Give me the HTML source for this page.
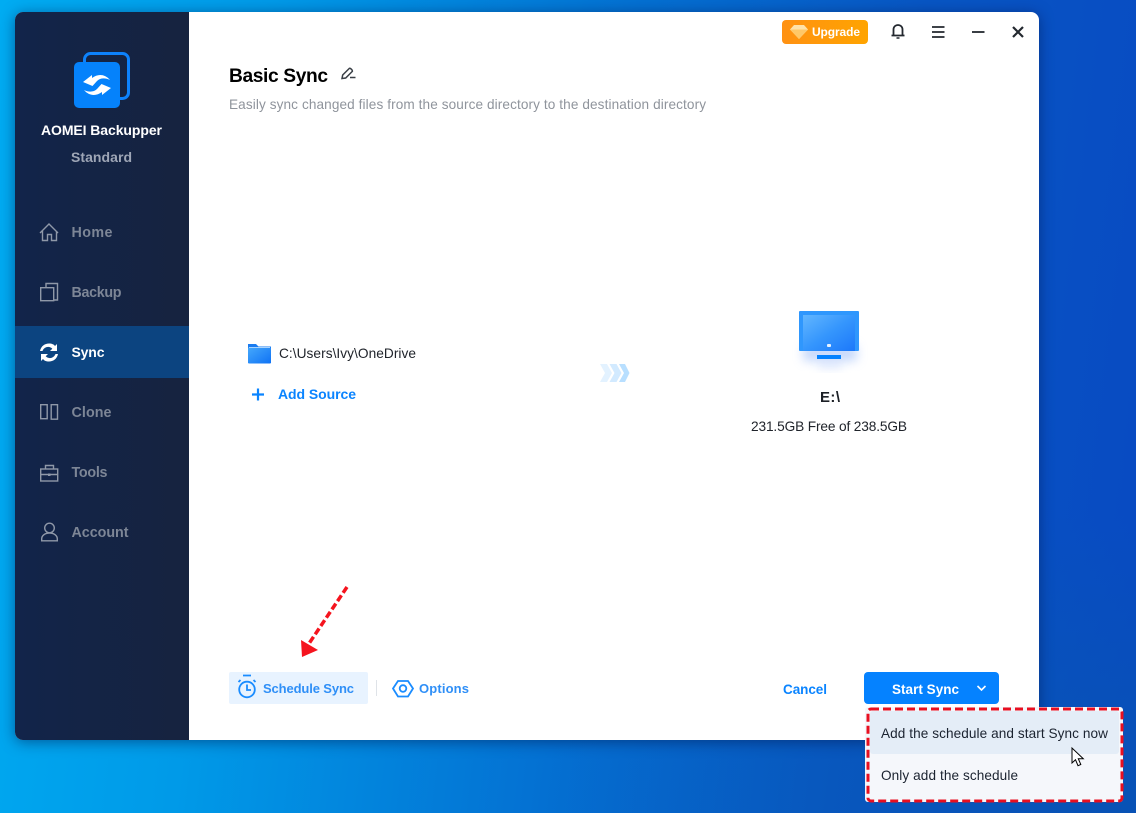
<!DOCTYPE html>
<html><head><meta charset="utf-8"><style>
html,body{margin:0;padding:0;width:1136px;height:813px;overflow:hidden}
body{position:relative;background:radial-gradient(600px 300px at 100% 100%,rgba(8,90,170,.55),rgba(8,90,170,0)),linear-gradient(97deg,#00acf2 0,#009ae8 22%,#0470d2 52%,#0856c4 75%,#0849c2 100%)}
.a{position:absolute}
svg{position:absolute;left:0;top:0}
text{font-family:"Liberation Sans",sans-serif}
</style></head><body>
<div class="a" style="left:15px;top:12px;width:1024px;height:728px;border-radius:8px;background:#fff;box-shadow:0 2px 14px rgba(0,20,70,.5);overflow:hidden">
<div class="a" style="left:0;top:0;width:174px;height:728px;background:linear-gradient(90deg,#12244a,#16233f)"></div>
<div class="a" style="left:0;top:314px;width:174px;height:52px;background:#0c4480"></div>
</div>
<div class="a" style="left:782px;top:20px;width:86px;height:24px;border-radius:4px;background:linear-gradient(90deg,#ff9112,#ffa400)"></div>
<div class="a" style="left:229px;top:672px;width:139px;height:32px;border-radius:2px;background:#e8f3ff"></div>
<div class="a" style="left:864px;top:672px;width:135px;height:32px;border-radius:4px;background:#0582ff"></div>
<div class="a" style="left:865px;top:707px;width:258px;height:95px;border-radius:3px;background:#f5f7fb"></div>
<div class="a" style="left:870px;top:711px;width:249px;height:43px;border-radius:3px;background:#e4edf7"></div>
<svg width="1136" height="813" viewBox="0 0 1136 813" fill="none">
<defs>
<linearGradient id="sc" x1="0" y1="0" x2="1" y2="1"><stop offset="0" stop-color="#62b6fe"/><stop offset=".5" stop-color="#3596fd"/><stop offset="1" stop-color="#1c78fa"/></linearGradient>
<linearGradient id="fo" x1="0" y1="0" x2="1" y2="1"><stop offset="0" stop-color="#45a8fb"/><stop offset="1" stop-color="#0f72f5"/></linearGradient>
<filter id="bl" x="-40%" y="-60%" width="180%" height="220%"><feGaussianBlur stdDeviation="5"/></filter>
</defs>
<!-- logo -->
<rect x="84.500" y="53.500" width="44" height="45" rx="6" stroke="#0d82fc" stroke-width="3"/>
<rect x="74" y="62" width="46" height="46" rx="5" fill="#0582fb"/>
<path d="M83 82L92 75v3C98 73.500 105 74 110 80C105 77.500 100 78 97 81L92.500 86z" fill="#fff"/>
<path d="M83 82L92 75v3C98 73.500 105 74 110 80C105 77.500 100 78 97 81L92.500 86z" fill="#fff" transform="rotate(180 97 85)"/>
<text x="41" y="135" font-size="14" font-weight="700" fill="#fff" textLength="121" lengthAdjust="spacing">AOMEI Backupper</text>
<text x="71" y="162" font-size="14" font-weight="700" fill="#9ea6b6" textLength="61" lengthAdjust="spacing">Standard</text>
<!-- nav icons -->
<g stroke="#8f98a8" stroke-width="1.400">
<path d="M40 233L49 224l9 9M42.500 231v9.500h5v-6h4v6h5V231"/>
<path d="M46 287v-3.500h11.500v16.500H54"/><rect x="40.700" y="287.700" width="13" height="13"/>
<rect x="40.700" y="404.700" width="6.500" height="14"/><path d="M51.200 404.700h6.300v14.500h-6.300z"/>
<rect x="40.700" y="469" width="17" height="12"/><path d="M45.500 469v-3.500h8v3.500M40.700 474.500h17"/><rect x="48" y="473.500" width="2.500" height="2.500" fill="#8f98a8" stroke="none"/>
<circle cx="49.500" cy="528" r="4.800"/><path d="M41.700 540.800v-2c0-3 3-5.800 7.800-5.800s7.800 2.800 7.800 5.800v2z"/>
</g>
<g fill="#fff"><path d="M40 351c1-5 5-7.500 9-7.500 3 0 5 1 6 2.500l2-2v7h-7l2.300-2.300c-2.800-3-8-2.200-9.800 2.300zM58 354c-1 5-5 7.500-9 7.500-3 0-5-1-6-2.500l-2 2v-7h7l-2.300 2.300c2.800 3 8 2.200 9.800-2.300z"/></g>
<g font-size="14.300" font-weight="700" fill="#7d8696">
<text x="71.500" y="237" textLength="41" lengthAdjust="spacing">Home</text>
<text x="71.500" y="297" textLength="50" lengthAdjust="spacing">Backup</text>
<text x="71.500" y="417" textLength="40" lengthAdjust="spacing">Clone</text>
<text x="71.500" y="477" textLength="36" lengthAdjust="spacing">Tools</text>
<text x="71.500" y="537" textLength="57" lengthAdjust="spacing">Account</text>
</g>
<text x="71.500" y="357" font-size="14" font-weight="700" fill="#fff" textLength="33" lengthAdjust="spacing">Sync</text>
<!-- upgrade -->
<path d="M790 29.500l4-4.500h10l4 4.500-9 9.500z" fill="#ffe2a8"/><path d="M790 29.500h18l-9 9.500z" fill="#ffc868"/>
<text x="812" y="36" font-size="12" font-weight="700" fill="#fff" textLength="48" lengthAdjust="spacing">Upgrade</text>
<g stroke="#23282f" stroke-width="1.800">
<path d="M891.500 35.500h13M893.500 35v-5.500c0-6 9-6 9 0V35"/><path d="M896.500 38h3" stroke-width="1.500"/>
<path d="M932 27h12.500M932 32h12.500M932 37h12.500"/>
<path d="M972 32h12.500"/>
<path d="M1013 27l10 10M1023 27l-10 10" stroke-width="2.200"/>
</g>
<!-- title -->
<text x="229" y="82" font-size="19.200" font-weight="700" fill="#000" textLength="99" lengthAdjust="spacing">Basic Sync</text>
<path d="M342 78.500l.7-3.500 6.500-6.500c1-.8 4 2 3 3l-6.500 6.500zM350 77.500h5.500" stroke="#3a3f46" stroke-width="1.500"/>
<text x="229" y="109" font-size="13.600" fill="#8f949c" textLength="477" lengthAdjust="spacing">Easily sync changed files from the source directory to the destination directory</text>
<!-- source -->
<path d="M248 344h8l2.500 2.500H271v16.500h-23z" fill="#1b7cf0"/><rect x="248" y="347.500" width="23" height="16" rx="1" fill="url(#fo)"/><path d="M249 347.500h21" stroke="#a8d4ff" stroke-width="1"/>
<text x="279" y="358" font-size="13.700" fill="#20242b" textLength="137" lengthAdjust="spacing">C:\Users\Ivy\OneDrive</text>
<path d="M258 388.500v12M252 394.500h12" stroke="#0a84ff" stroke-width="2.200"/>
<text x="278" y="399" font-size="14" font-weight="700" fill="#0a84ff" textLength="78" lengthAdjust="spacing">Add Source</text>
<!-- arrows -->
<path d="M600 364h7l5 9-5 9h-7l5-9z" fill="#e3f2ff"/><path d="M609.500 364h7l5 9-5 9h-7l5-9z" fill="#d2eaff"/><path d="M619 364h6l4.500 9-4.500 9h-6l5-9z" fill="#b8dfff"/>
<!-- monitor -->
<rect x="803" y="345" width="54" height="16" fill="#b4ccfa" opacity=".75" filter="url(#bl)"/>
<rect x="818" y="360" width="24" height="8" fill="#c8d8fb" opacity=".6" filter="url(#bl)"/>
<rect x="799" y="311" width="60" height="40" rx="1" fill="#2f97fd"/>
<rect x="803" y="315" width="52" height="36" fill="url(#sc)"/>
<rect x="827" y="344" width="4" height="3" rx="1" fill="#e8f3ff"/>
<rect x="817" y="355" width="24" height="4" fill="#0582ff"/>
<text x="820" y="402" font-size="15" font-weight="700" fill="#1c2026" textLength="20" lengthAdjust="spacing">E:\</text>
<text x="751" y="431" font-size="13.700" fill="#20242b" textLength="156" lengthAdjust="spacing">231.5GB Free of 238.5GB</text>
<!-- red arrow -->
<path d="M347 587L308 645" stroke="#f5141e" stroke-width="3.500" stroke-dasharray="7 3"/>
<path d="M302 657l-1-17 17 10z" fill="#f5141e"/>
<!-- schedule -->
<g stroke="#1a8cff" stroke-width="1.800">
<circle cx="247" cy="689.500" r="7.800"/><path d="M243 675.500h8M238.500 682l2-2M255.500 682l-2-2M247 684.500v5.500h4"/>
<path d="M398 681h10l5 7.500-5 8h-10l-5-8z"/><circle cx="403" cy="688.500" r="3.300"/>
</g>
<text x="263" y="693" font-size="13" font-weight="700" fill="#2f8ff7" textLength="91" lengthAdjust="spacing">Schedule Sync</text>
<path d="M376.500 680v16" stroke="#dfe3e8"/>
<text x="419" y="693" font-size="13" font-weight="700" fill="#2f8ff7" textLength="50" lengthAdjust="spacing">Options</text>
<text x="783" y="694" font-size="13.500" font-weight="700" fill="#0a84ff" textLength="44" lengthAdjust="spacing">Cancel</text>
<text x="892" y="694" font-size="13.500" font-weight="700" fill="#fff" textLength="67" lengthAdjust="spacing">Start Sync</text>
<path d="M977.500 686l4 4 4-4" stroke="#fff" stroke-width="1.600"/>
<!-- menu -->
<text x="881" y="738" font-size="13.600" fill="#1b2330" textLength="227" lengthAdjust="spacing">Add the schedule and start Sync now</text>
<text x="881" y="780" font-size="13.600" fill="#1b2330" textLength="137" lengthAdjust="spacing">Only add the schedule</text>
<rect x="868" y="709" width="254" height="92" rx="3" stroke="#e80f20" stroke-width="3" stroke-dasharray="8 4"/>
<!-- cursor -->
<path d="M1072 748v15l3.500-3.300 2.500 6 2.800-1.200-2.500-5.800h5z" fill="#fff" stroke="#000" stroke-width="1"/>
</svg>
</body></html>
